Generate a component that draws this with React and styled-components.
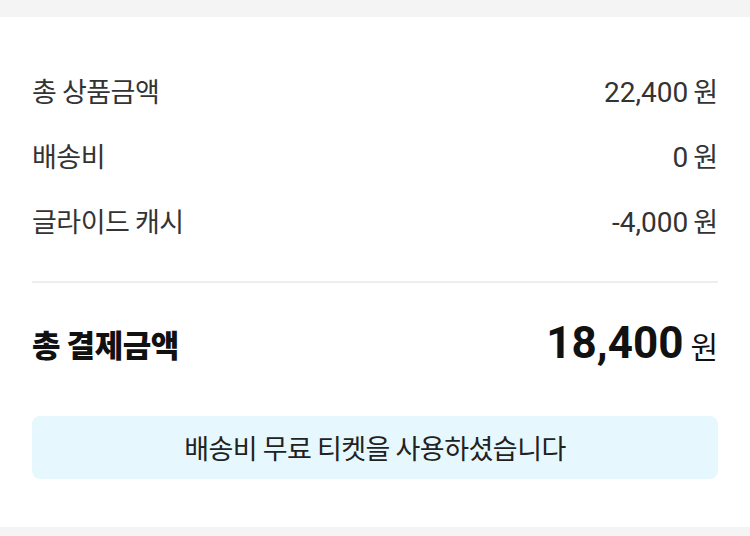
import React from "react";
import styled, { createGlobalStyle } from "styled-components";

const Global = createGlobalStyle`
  html, body { margin: 0; padding: 0; background: #f4f4f4; }
  body { font-family: Roboto, "Noto Sans CJK KR", sans-serif; }
`;

const Page = styled.div`
  width: 750px;
  padding-top: 17px;
  padding-bottom: 8px;
  background: #f4f4f4;
`;

const Section = styled.section`
  background: #fff;
  padding: 41px 32px 48px;
  display: flex;
  flex-direction: column;
`;

const Row = styled.div`
  height: 65px;
  display: flex;
  align-items: center;
  justify-content: space-between;
  font-size: 27px;
  color: #333;
`;

const Label = styled.span`
  font-family: "Noto Sans CJK KR", sans-serif;
  letter-spacing: -0.5px;
`;

const Amount = styled.span`
  display: flex;
  align-items: baseline;
  gap: ${(p) => (p.$strong ? "7px" : "5px")};
  font-size: 28px;
`;

const Won = styled.span`
  font-family: "Noto Sans CJK KR", sans-serif;
  font-size: ${(p) => (p.$strong ? "30px" : "27px")};
  color: ${(p) => (p.$strong ? "#111" : "#333")};
`;

const Divider = styled.hr`
  margin: 28px 0 0;
  border: 0;
  height: 2px;
  background: #eeeeee;
`;

const TotalRow = styled.div`
  height: 120px;
  display: flex;
  align-items: center;
  justify-content: space-between;
`;

const TotalLabel = styled.span`
  font-family: "Noto Sans CJK KR", sans-serif;
  font-weight: 900;
  font-size: 31px;
  color: #111;
  letter-spacing: -0.5px;
`;

const TotalValue = styled.span`
  font-family: Roboto, sans-serif;
  font-weight: 700;
  font-size: 44px;
  color: #111;
`;

const Notice = styled.div`
  margin-top: 13px;
  height: 63px;
  border-radius: 8px;
  background: #e6f8fd;
  display: flex;
  align-items: center;
  justify-content: center;
  font-family: "Noto Sans CJK KR", sans-serif;
  font-size: 27px;
  color: #222;
  letter-spacing: -0.5px;
`;

const items = [
  { label: "총 상품금액", value: "22,400" },
  { label: "배송비", value: "0" },
  { label: "글라이드 캐시", value: "-4,000" },
];

export default function App() {
  return (
    <>
      <Global />
      <Page>
        <Section>
          {items.map((it) => (
            <Row key={it.label}>
              <Label>{it.label}</Label>
              <Amount>
                {it.value}
                <Won>원</Won>
              </Amount>
            </Row>
          ))}
          <Divider />
          <TotalRow>
            <TotalLabel>총 결제금액</TotalLabel>
            <Amount $strong>
              <TotalValue>18,400</TotalValue>
              <Won $strong>원</Won>
            </Amount>
          </TotalRow>
          <Notice>배송비 무료 티켓을 사용하셨습니다</Notice>
        </Section>
      </Page>
    </>
  );
}
